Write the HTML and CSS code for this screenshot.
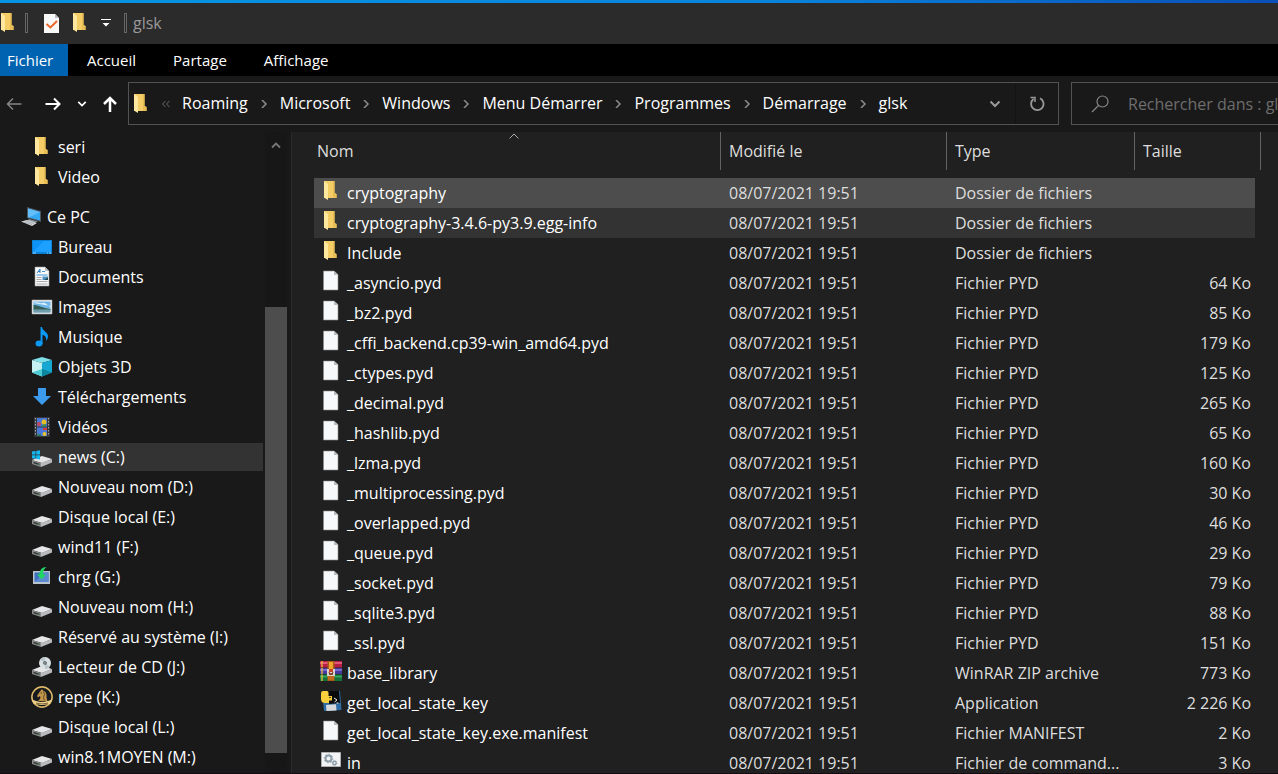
FILE: index.html
```html
<!DOCTYPE html>
<html lang="fr">
<head>
  <meta charset="UTF-8">
  <meta name="viewport" content="width=device-width, initial-scale=1.0">
  <title>glsk</title>
  <link rel="stylesheet" href="styles.css">
</head>
<body>
  <!-- shared icons -->
  <svg class="sprite" aria-hidden="true">
    <symbol id="folder" viewBox="0 0 22 22">
      <path d="M4 1h10.500v12l2 1v4H4z" fill="#f5cd66"/>
      <path d="M13 1h1.500v12l2 1v4H13z" fill="#e8bd55"/>
      <path d="M4 1l4 3v16l-4-2.500z" fill="#ffe7a0"/>
    </symbol>
    <symbol id="file" viewBox="0 0 22 22">
      <path d="M3.500 1H14l4 3.500V20H3.500z" fill="#f7f8f9" stroke="#8b8b8b" stroke-width=".6"/>
      <path d="M14 1v4h4z" fill="#b9bcc0"/>
    </symbol>
    <symbol id="drive" viewBox="0 0 22 22">
      <path d="M1 14l10-4 10 3-10 4z" fill="#e6e6e8"/>
      <path d="M1 14l9 3v4l-9-3z" fill="#8b8d8f"/>
      <path d="M10 17l11-4v3.500L10 21z" fill="#b9babd"/>
      <path d="M2.500 15.800l6 2v1.400l-6-2z" fill="#303330"/>
      <path d="M6.500 17.500l1.500.5v.8l-1.500-.5z" fill="#3fae56"/>
    </symbol>
    <symbol id="pc" viewBox="0 0 22 22">
      <path d="M7 1l14 4v11L7 12z" fill="#4a5660"/>
      <path d="M8 2.500l12 3.500v8.500L8 11.300z" fill="#36a9f5"/>
      <path d="M8 2.500l12 3.500L9 11.500l-1-.2z" fill="#62bffb"/>
      <path d="M9 13l9 2.500-4 1.500-7-2z" fill="#8d969c"/>
      <path d="M1 15.500l6-1.500 10 3-5 3z" fill="#d5d9dc"/>
      <path d="M3 15.800l9 2.700M6 15l8 2.500" stroke="#8a9095" stroke-width=".6"/>
    </symbol>
    <symbol id="desktop" viewBox="0 0 22 22">
      <path d="M1 4h20v14H1z" fill="#0b82d6"/>
      <path d="M2 5h18v11H2z" fill="#1da0ff"/>
      <path d="M2 16L13 5H2z" fill="#0d93f5"/>
      <path d="M2 17h3m11 0h1m1 0h2" stroke="#bfe5ff" stroke-width=".8"/>
    </symbol>
    <symbol id="documents" viewBox="0 0 22 22">
      <path d="M4 1h10l4 4v15H4z" fill="#fafafa" stroke="#999" stroke-width=".6"/>
      <path d="M14 1v4h4z" fill="#b5bcc2"/>
      <path d="M6 7l3-4v4M7 5.500h2" stroke="#2c7fc4" fill="none"/>
      <path d="M11 5.500h3M5.500 9h11" stroke="#3f94d6"/>
      <path d="M11.500 10.500H17V14h-5.500z" fill="#4b91c7"/>
      <path d="M13 14l4-2.500V14z" fill="#234a48"/>
      <path d="M5.500 11.500h5m-5 2h5m-5 2h11m-11 2.500h11" stroke="#a5a9ad"/>
    </symbol>
    <symbol id="images" viewBox="0 0 22 22">
      <path d="M1 4h20v14H1z" fill="#f4f4f4" stroke="#a0a0a0" stroke-width=".6"/>
      <path d="M2.500 5.500h17v11h-17z" fill="#6fb6e8"/>
      <path d="M2.500 7c4-2 6 1 9 0s5 3 8 4v-1z" fill="#dff0fa"/>
      <path d="M2.500 9c5 0 7 2.500 17 4v1h-17z" fill="#345e55"/>
      <path d="M2.500 13.500h17v3h-17z" fill="#6f9dab"/>
    </symbol>
    <symbol id="music" viewBox="0 0 22 22">
      <ellipse cx="8" cy="17.500" rx="3.500" ry="3" fill="#0a98f5"/>
      <path d="M9.500 1h1.500c.3 4 6 5 6 9 0 2-.7 3.500-2 5 .6-4-1-5.500-3.500-6v9h-2z" fill="#0a98f5"/>
    </symbol>
    <symbol id="cube" viewBox="0 0 22 22">
      <path d="M11 1l10 3-10 3L1 4z" fill="#7fe0e8"/>
      <path d="M1 4l10 3v13.500L1 16.500z" fill="#c4f0f2"/>
      <path d="M21 4L11 7v13.500l10-4z" fill="#17a7d3"/>
      <path d="M1 16.500l10-3.500v7.500z" fill="#4ccbd4"/>
      <path d="M21 16.500L11 13v7.500z" fill="#0c839f"/>
    </symbol>
    <symbol id="download" viewBox="0 0 22 22">
      <path d="M7 2h8v8h5l-9 9-9-9h5z" fill="#3c9bef"/>
    </symbol>
    <symbol id="videos" viewBox="0 0 22 22">
      <path d="M3 1h16v20H3z" fill="#34373b"/>
      <path d="M6 2h10v8.500H6zM6 11.500h10V20H6z" fill="#4a78d8"/>
      <path d="M4.500 2v18M17.500 2v18" stroke="#a4a4a4" stroke-dasharray="1.500 1.500"/>
      <circle cx="13" cy="6" r="2.500" fill="#e5bd24"/>
      <circle cx="8" cy="8" r="2" fill="#c8465a"/>
      <path d="M11 9l4-1v2.500h-4z" fill="#3d8f46"/>
      <path d="M12 12h4v2h-4z" fill="#d43c33"/>
      <circle cx="13.500" cy="18" r="2" fill="#e2c230"/>
      <path d="M6 18h4v2H6z" fill="#2f7f63"/>
    </symbol>
    <symbol id="winlogo" viewBox="0 0 22 22">
      <path d="M1 2.500l3.500-.5v3.500H1zM5.200 1.900L9 1.300v4.200H5.200zM1 6.300h3.500v3.500L1 9.300zM5.200 6.300H9v4.200l-3.800-.6z" fill="#14b8f0"/>
    </symbol>
    <symbol id="charge" viewBox="0 0 22 22">
      <path d="M2 5h17v13H2z" fill="#b9c3cc"/>
      <path d="M3.500 6.500h14v9.500h-14z" fill="#3f6fc0"/>
      <path d="M3.500 16l10-9.500h4V16z" fill="#5b8ad2"/>
      <path d="M15.500 1c-4.500 0-7 3-7 7.500H6l4.500 5 4.500-5h-3c0-3 1-6 3.500-7.500z" fill="#20d660"/>
    </symbol>
    <symbol id="cd" viewBox="0 0 22 22">
      <use href="#drive"/>
      <circle cx="14" cy="7" r="6" fill="#d9e1e4"/>
      <path d="M14 7l-5-3.500A6 6 0 0 1 14 1zM14 7l5 3.500A6 6 0 0 1 14 13z" fill="#b9c7cc"/>
      <circle cx="14" cy="7" r="1.800" fill="#40494c"/>
      <circle cx="14" cy="7" r=".7" fill="#e9eeee"/>
    </symbol>
    <symbol id="medal" viewBox="0 0 22 22">
      <circle cx="11" cy="11" r="10" fill="#171a1f" stroke="#d9ae55" stroke-width="1.400"/>
      <circle cx="11" cy="11" r="10.500" fill="none" stroke="#f3dc9a" stroke-width=".5"/>
      <path d="M7 15c2-2 3-3 2-5l-2 1.500L6 10l2.500-4L11 3l1 1.500c3 1 4 4 3.500 7l1 4z" fill="#c0954a"/>
      <path d="M12.500 5.500l1 3-1 3 1 3M9.500 7h1.500" stroke="#4a381d" fill="none" stroke-width=".8"/>
      <path d="M1 14c3 0 5 2 10 2s7-2 10-2l-2 4c-3 0-4 1-8 1s-5-1-8-1z" fill="#ecd08a"/>
      <path d="M5 17c4 1.200 8 1.200 12 0" stroke="#5a4522" fill="none" stroke-width=".8"/>
    </symbol>
    <symbol id="rar" viewBox="0 0 22 22">
      <path d="M0 1h22v6.500H0z" fill="#b51f45"/>
      <path d="M0 2h22v2H0z" fill="#e2567a"/>
      <path d="M0 8h22v6H0z" fill="#463a9c"/>
      <path d="M0 9h22v2H0z" fill="#746bd0"/>
      <path d="M0 14.500h22V21H0z" fill="#14713a"/>
      <path d="M0 15.500h22v2H0z" fill="#35a55f"/>
      <path d="M2 1v6.500M2 8v6m0 .5V21" stroke="#e8bd3a" stroke-width="1.300"/>
      <path d="M7.500 1h7v20h-7z" fill="#a75a1a"/>
      <path d="M9 2h4v7H9z" fill="#f0a52c"/>
      <path d="M7 9h8v7H7z" fill="#d9d6d0"/>
      <path d="M9 9v3h4V9" fill="#c6442a"/>
      <path d="M9 12l1 3 1-2 1 2 1-3" stroke="#743018" fill="none"/>
      <path d="M8 17h6M8 19h6" stroke="#db7d24"/>
    </symbol>
    <symbol id="pyapp" viewBox="0 0 22 22">
      <path d="M2 2l18-1 1.500 19L4 21z" fill="#2e6da4"/>
      <path d="M7 1h12l1 12-11 1z" fill="#0b0b0b"/>
      <path d="M6 15l10-.8.500 6.300L6.500 21z" fill="#d7d9db"/>
      <path d="M3 1h4c1 0 1.500.8 1.500 2v3H12v4.500H9V13H5c-2 0-4-1-4-4V4c0-2 .6-3 2-3z" fill="#f8cf3c"/>
      <circle cx="10" cy="7.500" r=".8" fill="#222"/>
      <path d="M14 8l3 2-2.500 2M16.500 13h2" stroke="#f2f2f2" fill="none"/>
    </symbol>
    <symbol id="batch" viewBox="0 0 22 22">
      <path d="M1.500 2.500h19v14h-19z" fill="#f3f4f5" stroke="#b0b0b0"/>
      <circle cx="8.500" cy="8.500" r="3" fill="none" stroke="#8fa0ab" stroke-width="2"/>
      <circle cx="8.500" cy="8.500" r="4.300" fill="none" stroke="#8fa0ab" stroke-dasharray="1.500 1.800"/>
      <circle cx="14.500" cy="13" r="1.700" fill="none" stroke="#8498a5" stroke-width="1.300"/>
      <circle cx="14.500" cy="13" r="2.600" fill="none" stroke="#8498a5" stroke-width=".8" stroke-dasharray="1 1"/>
    </symbol>
    <symbol id="check-doc" viewBox="0 0 22 22">
      <path d="M4 2h11l4 4v15H4z" fill="#f8f8f8"/>
      <path d="M15 2v4h4z" fill="#b8bbbe"/>
      <path d="M6.500 12l4 3.500L17 9" fill="none" stroke="#ea682c" stroke-width="2"/>
    </symbol>
    <symbol id="chevron-right" viewBox="0 0 8 8">
      <path d="M2 0l4 4-4 4" fill="none" stroke="currentColor" stroke-width="1.500"/>
    </symbol>
    <symbol id="chevron-down" viewBox="0 0 12 12">
      <path d="M1.500 3.500L6 8l4.500-4.500" fill="none" stroke="currentColor" stroke-width="2"/>
    </symbol>
  </svg>

  <div class="window">
    <header class="titlebar">
      <svg class="icon"><use href="#folder"/></svg>
      <span class="separator first"></span>
      <button class="quick" aria-label="Propriétés"><svg class="icon"><use href="#check-doc"/></svg></button>
      <button class="quick" aria-label="Nouveau dossier"><svg class="icon"><use href="#folder"/></svg></button>
      <button class="quick customize" aria-label="Personnaliser">
        <svg width="10" height="10" viewBox="0 0 10 10"><path d="M0 1.500h10" stroke="#fff"/><path d="M1.500 5h7L5 8.500z" fill="#fff"/></svg>
      </button>
      <span class="separator"></span>
      <span class="title">glsk</span>
    </header>

    <nav class="tabs">
      <button class="tab active">Fichier</button>
      <button class="tab">Accueil</button>
      <button class="tab">Partage</button>
      <button class="tab">Affichage</button>
    </nav>

    <div class="toolbar">
      <div class="history">
        <button class="back" aria-label="Précédent">
          <svg width="16" height="16" viewBox="0 0 16 16"><path d="M15.500 8H1.500M7 2.500L1.500 8 7 13.500" fill="none" stroke="currentColor" stroke-width="1.500"/></svg>
        </button>
        <button class="forward" aria-label="Suivant">
          <svg width="16" height="16" viewBox="0 0 16 16"><path d="M.5 8h14M9 2.500L14.500 8 9 13.500" fill="none" stroke="currentColor" stroke-width="2"/></svg>
        </button>
        <button class="recent" aria-label="Emplacements récents"><svg width="10" height="10"><use href="#chevron-down"/></svg></button>
        <button class="up" aria-label="Dossier parent">
          <svg width="16" height="16" viewBox="0 0 16 16"><path d="M8 16V2M2 8l6-6 6 6" fill="none" stroke="currentColor" stroke-width="2.500"/></svg>
        </button>
      </div>
      <div class="address">
        <svg class="icon"><use href="#folder"/></svg>
        <svg class="overflow" width="8" height="8" viewBox="0 0 8 8"><path d="M3.500 1l-3 3 3 3M7.500 1l-3 3 3 3" fill="none" stroke="currentColor"/></svg>
        <a class="crumb" href="#">Roaming</a>
        <svg class="arrow"><use href="#chevron-right"/></svg>
        <a class="crumb" href="#">Microsoft</a>
        <svg class="arrow"><use href="#chevron-right"/></svg>
        <a class="crumb" href="#">Windows</a>
        <svg class="arrow"><use href="#chevron-right"/></svg>
        <a class="crumb" href="#">Menu Démarrer</a>
        <svg class="arrow"><use href="#chevron-right"/></svg>
        <a class="crumb" href="#">Programmes</a>
        <svg class="arrow"><use href="#chevron-right"/></svg>
        <a class="crumb" href="#">Démarrage</a>
        <svg class="arrow"><use href="#chevron-right"/></svg>
        <a class="crumb" href="#">glsk</a>
        <button class="dropdown" aria-label="Emplacements précédents"><svg width="12" height="12"><use href="#chevron-down"/></svg></button>
        <button class="refresh" aria-label="Actualiser">
          <svg width="16" height="16" viewBox="0 0 16 16"><path d="M11 2.300A6.200 6.200 0 1 1 4.500 3" fill="none" stroke="currentColor" stroke-width="1.800"/><path d="M1.500 1.500H6V6" fill="none" stroke="currentColor" stroke-width="1.500"/></svg>
        </button>
      </div>
      <div class="search">
        <svg width="18" height="18" viewBox="0 0 18 18"><circle cx="11.500" cy="6.500" r="5.500" fill="none" stroke="currentColor" stroke-width="1.200"/><path d="M7.500 10.500L1 17" stroke="currentColor" stroke-width="1.300"/></svg>
        <input type="text" aria-label="Rechercher" placeholder="Rechercher dans : glsk">
      </div>
    </div>

    <div class="content">
      <aside class="sidebar">
        <nav class="tree">
          <a href="#"><svg class="icon"><use href="#folder"/></svg>seri</a>
          <a href="#"><svg class="icon"><use href="#folder"/></svg>Video</a>
          <a href="#" class="root"><svg class="icon"><use href="#pc"/></svg>Ce PC</a>
          <a href="#"><svg class="icon"><use href="#desktop"/></svg>Bureau</a>
          <a href="#"><svg class="icon"><use href="#documents"/></svg>Documents</a>
          <a href="#"><svg class="icon"><use href="#images"/></svg>Images</a>
          <a href="#"><svg class="icon"><use href="#music"/></svg>Musique</a>
          <a href="#"><svg class="icon"><use href="#cube"/></svg>Objets 3D</a>
          <a href="#"><svg class="icon"><use href="#download"/></svg>Téléchargements</a>
          <a href="#"><svg class="icon"><use href="#videos"/></svg>Vidéos</a>
          <a href="#" class="selected"><svg class="icon"><use href="#drive"/><use href="#winlogo" y="3"/></svg>news (C:)</a>
          <a href="#"><svg class="icon"><use href="#drive"/></svg>Nouveau nom (D:)</a>
          <a href="#"><svg class="icon"><use href="#drive"/></svg>Disque local (E:)</a>
          <a href="#"><svg class="icon"><use href="#drive"/></svg>wind11 (F:)</a>
          <a href="#"><svg class="icon"><use href="#charge"/></svg>chrg (G:)</a>
          <a href="#"><svg class="icon"><use href="#drive"/></svg>Nouveau nom (H:)</a>
          <a href="#"><svg class="icon"><use href="#drive"/></svg>Réservé au système (I:)</a>
          <a href="#"><svg class="icon"><use href="#cd"/></svg>Lecteur de CD (J:)</a>
          <a href="#"><svg class="icon"><use href="#medal"/></svg>repe (K:)</a>
          <a href="#"><svg class="icon"><use href="#drive"/></svg>Disque local (L:)</a>
          <a href="#"><svg class="icon"><use href="#drive"/></svg>win8.1MOYEN (M:)</a>
        </nav>
        <div class="scrollbar">
          <svg width="10" height="10" viewBox="0 0 10 10"><path d="M1 7.500l4-4 4 4" fill="none" stroke="#777" stroke-width="1.800"/></svg>
          <div class="thumb"></div>
        </div>
      </aside>

      <main class="files">
        <table>
          <colgroup>
            <col>
            <col class="col-date">
            <col class="col-type">
            <col class="col-size">
          </colgroup>
          <thead>
            <tr>
              <th>Nom<svg class="sort" width="10" height="6" viewBox="0 0 10 6"><path d="M.5 5.500L5 1l4.500 4.500" fill="none" stroke="#aaa"/></svg></th>
              <th>Modifié le</th>
              <th>Type</th>
              <th>Taille</th>
            </tr>
          </thead>
          <tbody>
            <tr class="focused"><td><svg class="icon"><use href="#folder"/></svg>cryptography</td><td>08/07/2021 19:51</td><td>Dossier de fichiers</td><td></td></tr>
            <tr class="hover"><td><svg class="icon"><use href="#folder"/></svg>cryptography-3.4.6-py3.9.egg-info</td><td>08/07/2021 19:51</td><td>Dossier de fichiers</td><td></td></tr>
            <tr><td><svg class="icon"><use href="#folder"/></svg>Include</td><td>08/07/2021 19:51</td><td>Dossier de fichiers</td><td></td></tr>
            <tr><td><svg class="icon"><use href="#file"/></svg>_asyncio.pyd</td><td>08/07/2021 19:51</td><td>Fichier PYD</td><td>64 Ko</td></tr>
            <tr><td><svg class="icon"><use href="#file"/></svg>_bz2.pyd</td><td>08/07/2021 19:51</td><td>Fichier PYD</td><td>85 Ko</td></tr>
            <tr><td><svg class="icon"><use href="#file"/></svg>_cffi_backend.cp39-win_amd64.pyd</td><td>08/07/2021 19:51</td><td>Fichier PYD</td><td>179 Ko</td></tr>
            <tr><td><svg class="icon"><use href="#file"/></svg>_ctypes.pyd</td><td>08/07/2021 19:51</td><td>Fichier PYD</td><td>125 Ko</td></tr>
            <tr><td><svg class="icon"><use href="#file"/></svg>_decimal.pyd</td><td>08/07/2021 19:51</td><td>Fichier PYD</td><td>265 Ko</td></tr>
            <tr><td><svg class="icon"><use href="#file"/></svg>_hashlib.pyd</td><td>08/07/2021 19:51</td><td>Fichier PYD</td><td>65 Ko</td></tr>
            <tr><td><svg class="icon"><use href="#file"/></svg>_lzma.pyd</td><td>08/07/2021 19:51</td><td>Fichier PYD</td><td>160 Ko</td></tr>
            <tr><td><svg class="icon"><use href="#file"/></svg>_multiprocessing.pyd</td><td>08/07/2021 19:51</td><td>Fichier PYD</td><td>30 Ko</td></tr>
            <tr><td><svg class="icon"><use href="#file"/></svg>_overlapped.pyd</td><td>08/07/2021 19:51</td><td>Fichier PYD</td><td>46 Ko</td></tr>
            <tr><td><svg class="icon"><use href="#file"/></svg>_queue.pyd</td><td>08/07/2021 19:51</td><td>Fichier PYD</td><td>29 Ko</td></tr>
            <tr><td><svg class="icon"><use href="#file"/></svg>_socket.pyd</td><td>08/07/2021 19:51</td><td>Fichier PYD</td><td>79 Ko</td></tr>
            <tr><td><svg class="icon"><use href="#file"/></svg>_sqlite3.pyd</td><td>08/07/2021 19:51</td><td>Fichier PYD</td><td>88 Ko</td></tr>
            <tr><td><svg class="icon"><use href="#file"/></svg>_ssl.pyd</td><td>08/07/2021 19:51</td><td>Fichier PYD</td><td>151 Ko</td></tr>
            <tr><td><svg class="icon"><use href="#rar"/></svg>base_library</td><td>08/07/2021 19:51</td><td>WinRAR ZIP archive</td><td>773 Ko</td></tr>
            <tr><td><svg class="icon"><use href="#pyapp"/></svg>get_local_state_key</td><td>08/07/2021 19:51</td><td>Application</td><td>2 226 Ko</td></tr>
            <tr><td><svg class="icon"><use href="#file"/></svg>get_local_state_key.exe.manifest</td><td>08/07/2021 19:51</td><td>Fichier MANIFEST</td><td>2 Ko</td></tr>
            <tr><td><svg class="icon"><use href="#batch"/></svg>in</td><td>08/07/2021 19:51</td><td>Fichier de command...</td><td>3 Ko</td></tr>
          </tbody>
        </table>
      </main>
    </div>
  </div>
</body>
</html>
```
FILE: styles.css
```css
* {
  box-sizing: border-box;
}
body {
  margin: 0;
  background: #191919;
  color: #fff;
  font-family: "Open Sans", "Noto Sans", sans-serif;
  font-size: 16px;
}
button {
  padding: 0;
  border: none;
  background: none;
  color: inherit;
  font: inherit;
  cursor: pointer;
}
a {
  color: inherit;
  text-decoration: none;
}
svg {
  display: block;
  flex: none;
}
.sprite {
  position: absolute;
  width: 0;
  height: 0;
}
.icon {
  width: 22px;
  height: 22px;
}
.window {
  display: flex;
  flex-direction: column;
  height: 100vh;
  overflow: hidden;
}

/* title bar */
.titlebar {
  display: flex;
  align-items: center;
  height: 44px;
  padding-bottom: 1px;
  border-top: 3px solid;
  border-image: linear-gradient(to right, #0795e3, #0a84dc 60%, #0a50b8) 1;
  background: #2b2b2b;
}
.titlebar > .icon {
  margin-left: -3px;
}
.separator {
  width: 3px;
  height: 20px;
  border: 1px solid #666;
}
.separator.first {
  margin: 0 12px 0 6px;
}
.quick {
  margin-right: 7px;
}
.customize {
  margin: 0 13px 0 3px;
}
.title {
  margin-left: 6px;
  color: #999;
}

/* ribbon tabs */
.tabs {
  display: flex;
  flex: none;
  height: 32px;
  background: #000;
  font-size: 15px;
}
.tab {
  margin-right: 19px;
  padding: 0 9px;
}
.tab.active {
  width: 68px;
  margin-right: 10px;
  padding: 0 17px 0 7px;
  background: #0063b1;
}

/* address bar */
.toolbar {
  display: flex;
  flex: none;
  gap: 12px;
  height: 56px;
  padding: 6px 0 7px;
}
.history {
  display: flex;
  align-items: center;
  width: 116px;
  padding-left: 6px;
}
.back {
  margin-right: 23px;
  color: #858585;
}
.forward {
  margin-right: 16px;
}
.recent {
  margin-right: 15px;
}
.address {
  display: flex;
  flex: 1;
  align-items: center;
  min-width: 0;
  border: 1px solid #535353;
}
.address .icon {
  margin-left: 1px;
}
.crumb {
  padding-bottom: 2px;
}
.overflow {
  margin: 0 12px 0 10px;
  color: #686868;
}
.arrow {
  width: 8px;
  height: 8px;
  margin: 0 12px;
  color: #8d8d8d;
}
.dropdown {
  margin-left: auto;
  margin-right: 14px;
  color: #999;
}
.refresh {
  display: flex;
  align-items: center;
  justify-content: center;
  align-self: stretch;
  width: 43px;
  border-left: 1px solid #141414;
  color: #999;
}
.search {
  display: flex;
  flex: none;
  align-items: center;
  width: 207px;
  padding-left: 19px;
  border: 1px solid #535353;
  border-right: none;
  color: #858585;
}
.search input {
  flex: 1;
  min-width: 0;
  margin-left: 19px;
  padding: 0;
  border: none;
  outline: none;
  background: none;
  color: #fff;
  font: inherit;
}
.search input::placeholder {
  color: #6d6d6d;
  opacity: 1;
}

/* content */
.content {
  display: flex;
  flex: 1;
  min-height: 0;
  border-bottom: 1px solid #120c10;
}
.sidebar {
  display: flex;
  flex: none;
  width: 292px;
  border-right: 1px solid #2b2b2b;
}
.tree {
  flex: 1;
  overflow: hidden;
}
.tree a {
  display: flex;
  align-items: center;
  gap: 5px;
  height: 28px;
  margin: 1px 2px 2px 0;
  padding-left: 31px;
  white-space: nowrap;
}
.tree .root {
  margin-top: 12px;
  padding-left: 20px;
}
.tree .selected {
  background: #333;
}
.scrollbar {
  display: flex;
  flex-direction: column;
  align-items: center;
  width: 22px;
  margin-right: 4px;
  padding: 8px 0 20px;
  background: #171717;
}
.thumb {
  flex: 1;
  width: 100%;
  margin-top: 157px;
  background: #4d4d4d;
}
.files {
  flex: 1;
  min-width: 0;
  padding: 0 17px 0 22px;
  background: #202020;
}

/* file list */
table {
  width: 100%;
  table-layout: fixed;
  border-spacing: 0;
}
.col-date {
  width: 226px;
}
.col-type {
  width: 188px;
}
.col-size {
  width: 126px;
}
th {
  position: relative;
  height: 38px;
  padding: 0 8px;
  border-right: 1px solid #636363;
  color: #dedede;
  font-weight: normal;
  text-align: left;
}
th:first-child {
  padding-left: 3px;
}
.sort {
  position: absolute;
  top: 1px;
  left: 50%;
  margin-left: -8px;
}
thead::after {
  content: "";
  display: block;
  height: 8px;
}
td {
  height: 30px;
  padding: 0 8px;
  color: #dedede;
  line-height: 22px;
  white-space: nowrap;
}
td:first-child {
  padding-left: 6px;
  color: #fff;
}
td:last-child {
  padding-right: 4px;
  border-right: 6px solid transparent;
  background-clip: padding-box;
  text-align: right;
}
td .icon {
  float: left;
  margin: -2px 5px 0 0;
}
.focused td {
  background-color: #4d4d4d;
}
.hover td {
  background-color: #333;
}
```
